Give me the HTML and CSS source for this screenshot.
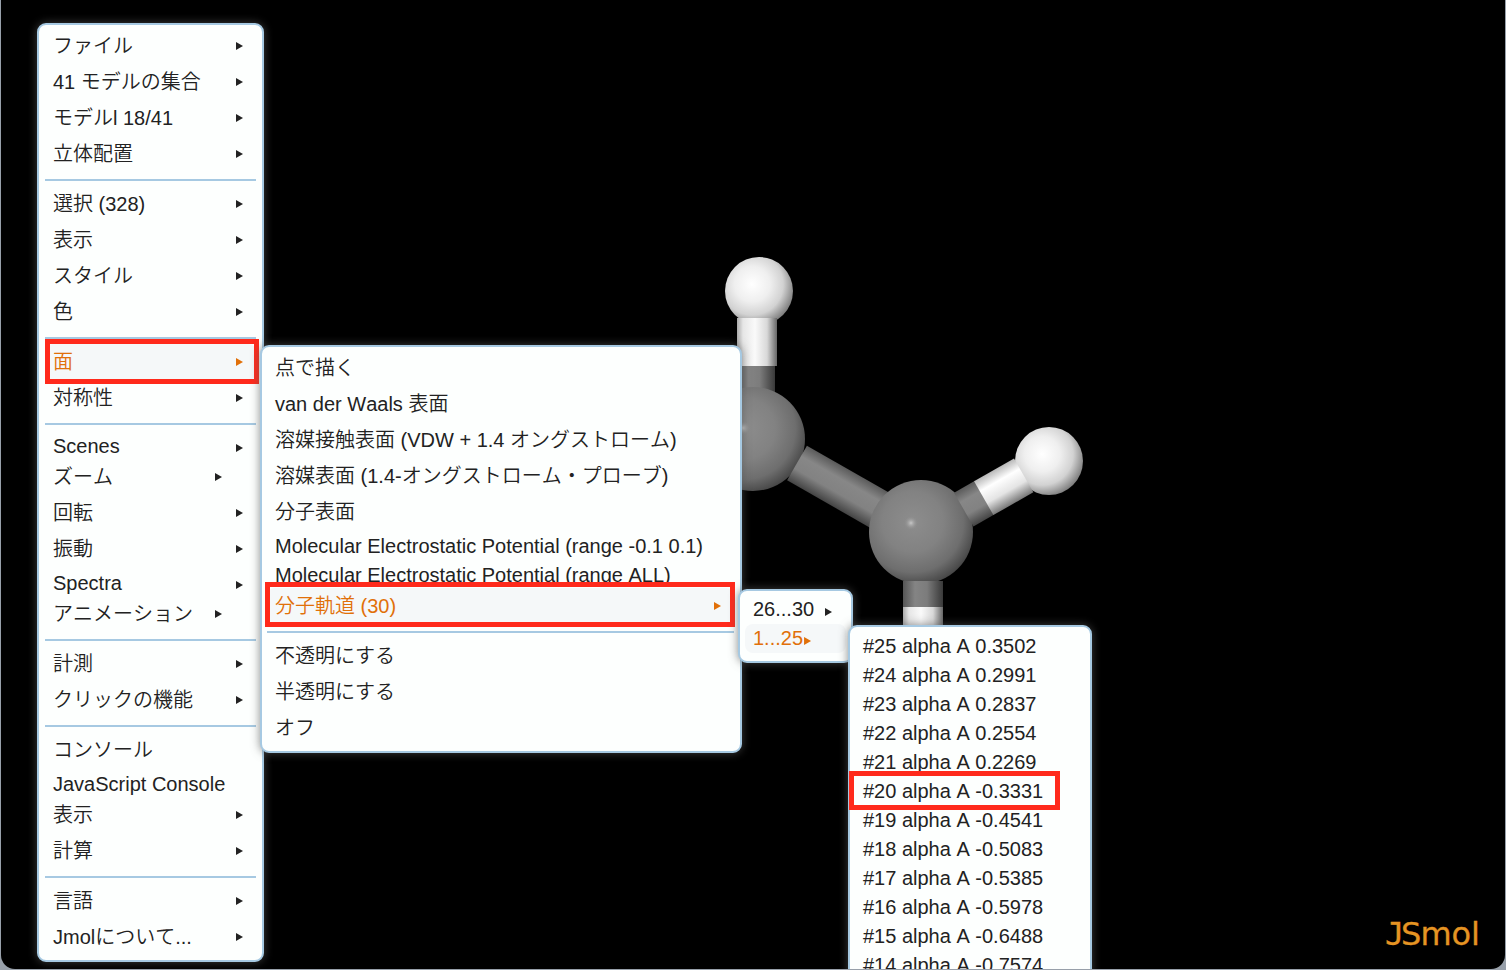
FILE: index.html
```
<!DOCTYPE html>
<html lang="ja">
<head>
<meta charset="utf-8">
<title>JSmol</title>
<link rel="stylesheet" href="styles.css">
</head>
<body>
<main class="viewer">
  <svg class="scene" width="1506" height="970" viewBox="0 0 1506 970">
    <defs>
      <radialGradient id="hydrogen" cx=".4" cy=".4" r=".65">
        <stop offset="0" stop-color="#fff"/><stop offset=".4" stop-color="#efefef"/><stop offset=".7" stop-color="#d2d2d2"/><stop offset="1" stop-color="#777"/>
      </radialGradient>
      <radialGradient id="carbon" cx=".42" cy=".4" r=".65">
        <stop offset="0" stop-color="#8d8d8d"/><stop offset=".45" stop-color="#828282"/><stop offset=".75" stop-color="#6e6e6e"/><stop offset="1" stop-color="#404040"/>
      </radialGradient>
      <radialGradient id="glint">
        <stop offset="0" stop-color="#c8c8c8"/><stop offset="1" stop-color="#8d8d8d" stop-opacity="0"/>
      </radialGradient>
      <linearGradient id="whiteBond">
        <stop offset="0" stop-color="#aaa"/><stop offset=".15" stop-color="#e6e6e6"/><stop offset=".45" stop-color="#fafafa"/><stop offset=".75" stop-color="#d8d8d8"/><stop offset="1" stop-color="#666"/>
      </linearGradient>
      <linearGradient id="grayBond">
        <stop offset="0" stop-color="#555"/><stop offset=".3" stop-color="#848484"/><stop offset=".6" stop-color="#7c7c7c"/><stop offset="1" stop-color="#393939"/>
      </linearGradient>
      <linearGradient id="bondSide" x1="0" y1="0" x2="0" y2="1">
        <stop offset="0" stop-color="#5a5a5a"/><stop offset=".3" stop-color="#878787"/><stop offset=".65" stop-color="#828282"/><stop offset="1" stop-color="#444"/>
      </linearGradient>
      <linearGradient id="bondSideWhite" x1="0" y1="0" x2="0" y2="1">
        <stop offset="0" stop-color="#b8b8b8"/><stop offset=".3" stop-color="#fff"/><stop offset=".65" stop-color="#e4e4e4"/><stop offset="1" stop-color="#777"/>
      </linearGradient>
    </defs>
    <circle cx="759" cy="291" r="34" fill="url(#hydrogen)"/>
    <rect x="737" y="318" width="40" height="48" fill="url(#whiteBond)"/>
    <rect x="737" y="366" width="38" height="32" fill="url(#grayBond)"/>
    <circle cx="753" cy="439" r="52" fill="url(#carbon)"/>
    <circle cx="743" cy="428" r="7" fill="url(#glint)"/>
    <g transform="translate(797 463) rotate(29.7)">
      <rect x="0" y="-20" width="105" height="40" fill="url(#bondSide)"/>
    </g>
    <rect x="903" y="607" width="40" height="40" fill="url(#whiteBond)"/>
    <circle cx="921" cy="532" r="52" fill="url(#carbon)"/>
    <circle cx="911" cy="523" r="7" fill="url(#glint)"/>
    <rect x="903" y="581" width="40" height="26" fill="url(#grayBond)"/>
    <circle cx="1049" cy="461" r="34" fill="url(#hydrogen)"/>
    <g transform="translate(964 510) rotate(-29.7)">
      <rect x="0" y="-20" width="24" height="39" fill="url(#bondSide)"/>
      <rect x="23" y="-20" width="46" height="39" fill="url(#bondSideWhite)"/>
    </g>
    <text class="logo" y="945"><tspan class="logo-j" x="1385">J</tspan><tspan x="1401 1420.5 1451.5 1471">Smol</tspan></text>
  </svg>

  <nav class="menu menu-main">
    <ul>
      <li class="arrow">ファイル</li>
      <li class="arrow">41 モデルの集合</li>
      <li class="arrow">モデルl 18/41</li>
      <li class="arrow">立体配置</li>
      <li class="sep"></li>
      <li class="arrow">選択 (328)</li>
      <li class="arrow">表示</li>
      <li class="arrow">スタイル</li>
      <li class="arrow">色</li>
      <li class="sep"></li>
      <li class="arrow active">面</li>
      <li class="arrow">対称性</li>
      <li class="sep"></li>
      <li class="arrow latin">Scenes</li>
      <li class="arrow inset">ズーム</li>
      <li class="arrow">回転</li>
      <li class="arrow">振動</li>
      <li class="arrow latin">Spectra</li>
      <li class="arrow inset">アニメーション</li>
      <li class="sep"></li>
      <li class="arrow">計測</li>
      <li class="arrow">クリックの機能</li>
      <li class="sep"></li>
      <li>コンソール</li>
      <li class="latin">JavaScript Console</li>
      <li class="arrow">表示</li>
      <li class="arrow">計算</li>
      <li class="sep"></li>
      <li class="arrow">言語</li>
      <li class="arrow">Jmolについて...</li>
    </ul>
  </nav>
  <div class="mark mark-surface"></div>

  <nav class="menu menu-surface">
    <ul>
      <li>点で描く</li>
      <li>van der Waals 表面</li>
      <li>溶媒接触表面 (VDW + 1.4 オングストローム)</li>
      <li>溶媒表面 (1.4-オングストローム・プローブ)</li>
      <li>分子表面</li>
      <li class="latin">Molecular Electrostatic Potential (range -0.1 0.1)</li>
      <li class="latin">Molecular Electrostatic Potential (range ALL)</li>
      <li class="arrow active">分子軌道 (30)</li>
      <li class="sep"></li>
      <li>不透明にする</li>
      <li>半透明にする</li>
      <li>オフ</li>
    </ul>
  </nav>
  <div class="mark mark-orbitals"></div>

  <nav class="menu menu-range">
    <ul>
      <li class="arrow latin">26...30</li>
      <li class="arrow latin active tight">1...25</li>
    </ul>
  </nav>

  <nav class="menu menu-levels">
    <ul>
      <li class="latin">#25 alpha A 0.3502</li>
      <li class="latin">#24 alpha A 0.2991</li>
      <li class="latin">#23 alpha A 0.2837</li>
      <li class="latin">#22 alpha A 0.2554</li>
      <li class="latin">#21 alpha A 0.2269</li>
      <li class="latin">#20 alpha A -0.3331</li>
      <li class="latin">#19 alpha A -0.4541</li>
      <li class="latin">#18 alpha A -0.5083</li>
      <li class="latin">#17 alpha A -0.5385</li>
      <li class="latin">#16 alpha A -0.5978</li>
      <li class="latin">#15 alpha A -0.6488</li>
      <li class="latin">#14 alpha A -0.7574</li>
    </ul>
  </nav>
  <div class="mark mark-level"></div>
</main>
</body>
</html>
```
FILE: styles.css
```
* { box-sizing: border-box; }

body {
  margin: 0;
  height: 970px;
  overflow: hidden;
  background: #98a0aa;
  font: 350 20px "Liberation Sans", "Noto Sans CJK JP", sans-serif;
  font-kerning: none;
  color: #222;
}

.viewer {
  position: relative;
  width: 1504px;
  height: 969px;
  margin-left: 1px;
  overflow: hidden;
  background: #000;
  border-radius: 0 0 14px 14px;
}

.scene {
  display: block;
  margin-left: -1px;
}

.logo {
  font: 32px "DejaVu Sans", sans-serif;
  fill: #e59423;
  stroke: #e59423;
  stroke-width: .3px;
}

.logo-j { font-family: "DejaVu Sans Mono", monospace; }

/* Popup menus float over the molecule canvas */
.menu {
  position: absolute;
  padding: 3px 5px 5px;
  background: #fdfffe;
  border: 2px solid #a6c9e2;
  border-radius: 9px;
  box-shadow: 0 0 10px rgba(90, 90, 90, .7);
}

.menu ul {
  list-style: none;
  margin: 0;
  padding: 0;
}

.menu li {
  display: flex;
  align-items: center;
  height: 36px;
  line-height: 36px;
  padding: 0 15px 0 9px;
  white-space: nowrap;
  border-radius: 8px;
}

.menu li.latin {
  height: 29px;
  line-height: 25px;
  padding-top: 4px;
}

.menu li.sep {
  height: 2px;
  margin: 7px 0 5px;
  padding: 0;
  border-radius: 0;
  background: #a6c9e2;
}

.arrow::after {
  content: "";
  margin-left: auto;
  width: 7px;
  height: 8px;
  background: currentColor;
  clip-path: polygon(0 0, 100% 50%, 0 100%);
}

.latin.arrow::after { margin-top: 3px; }
.menu li.active { color: #e17009; background: #f5f8f9; }

.menu-main { left: 36px; top: 23px; width: 227px; padding-left: 6px; padding-right: 6px; }
.menu-main li { padding-left: 8px; padding-right: 13px; }
.menu-main li.inset { padding-right: 34px; }

.menu-surface { left: 259px; top: 345px; width: 482px; padding-right: 6px; }
.menu-surface li { padding-left: 8px; padding-right: 13px; }

.menu-range { left: 737px; top: 589px; width: 115px; height: 74px; }
.menu-range ul { padding-top: 1px; }
.menu-range li.latin { padding: 0 14px 0 8px; line-height: 27px; }
.menu-range .arrow::after { margin-top: 5px; }
.menu .tight::after { margin-left: 1px; }

.menu-levels { left: 847px; top: 625px; width: 244px; height: 360px; border-radius: 9px 9px 0 0; }
.menu-levels li { padding-left: 8px; }

/* Annotation frames */
.mark {
  position: absolute;
  border: 5px solid #ff2a1c;
}

.mark-surface { left: 44px; top: 339px; width: 214px; height: 45px; }
.mark-orbitals { left: 264px; top: 582px; width: 470px; height: 45px; }
.mark-level { left: 848px; top: 771px; width: 211px; height: 39px; }
```
